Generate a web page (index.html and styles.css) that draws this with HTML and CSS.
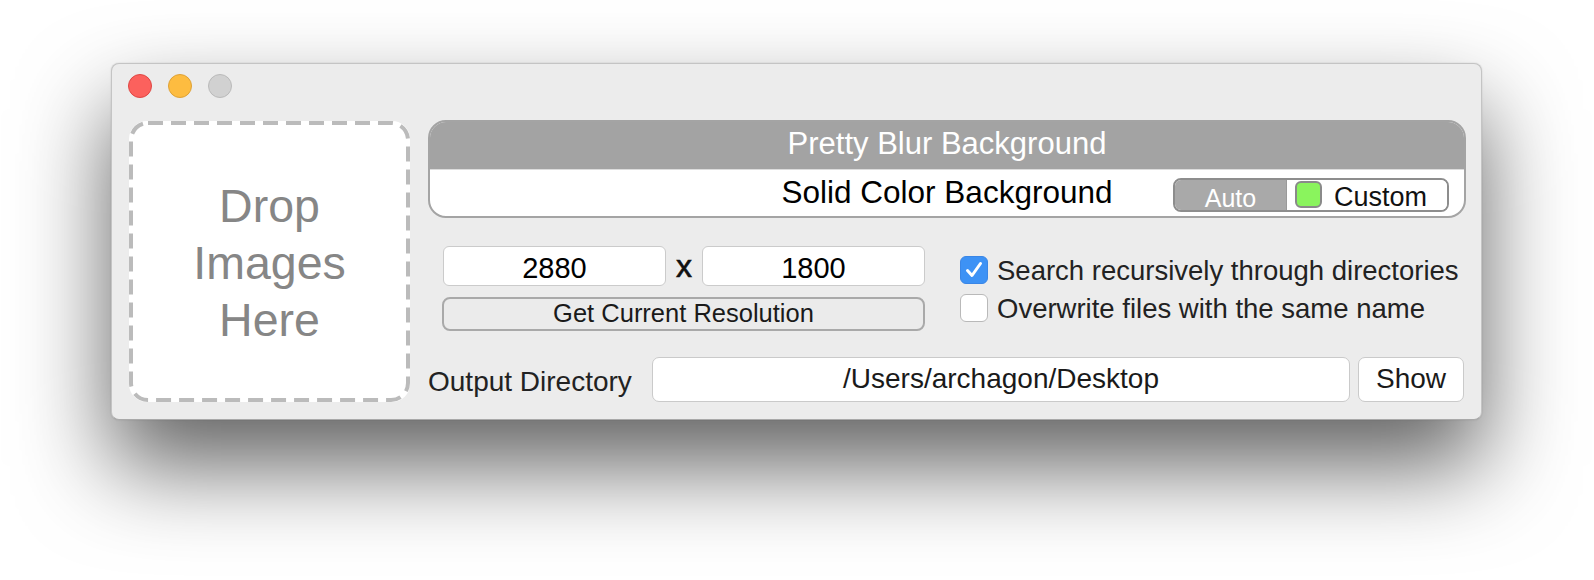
FILE: index.html
```html
<!DOCTYPE html>
<html>
<head>
<meta charset="utf-8">
<link rel="stylesheet" href="styles.css">
</head>
<body>
<div class="window">
  <div class="titlebar">
    <span class="light red"></span>
    <span class="light yellow"></span>
    <span class="light grey"></span>
  </div>
  <div class="content">
    <div class="drop">
      <svg class="dash" width="281" height="281" viewBox="0 0 281 281">
        <rect x="2" y="2" width="277" height="277" rx="17" ry="17" fill="none" stroke="#bbbbbb" stroke-width="4" stroke-dasharray="15 8"/>
      </svg>
      <div class="drop-text">Drop<br>Images<br>Here</div>
    </div>
    <div class="main">
      <div class="panel">
        <div class="panel-head">Pretty Blur Background</div>
        <div class="panel-row">
          <span></span>
          <span class="panel-title">Solid Color Background</span>
          <div class="segmented">
            <div class="seg-auto">Auto</div>
            <div class="seg-custom"><span class="swatch"></span><span class="seg-label">Custom</span></div>
          </div>
        </div>
      </div>
      <div class="middle">
        <div class="res">
          <div class="res-inputs">
            <div class="field">2880</div>
            <span class="times">x</span>
            <div class="field">1800</div>
          </div>
          <div class="btn-wide">Get Current Resolution</div>
        </div>
        <div class="checks">
          <div class="check">
            <span class="box checked"><svg width="28" height="28" viewBox="0 0 28 28"><path d="M7.5 14.5 L12 19.5 L20.5 7.5" fill="none" stroke="#fff" stroke-width="3" stroke-linecap="round" stroke-linejoin="round"/></svg></span>
            <span class="check-label">Search recursively through directories</span>
          </div>
          <div class="check">
            <span class="box"></span>
            <span class="check-label">Overwrite files with the same name</span>
          </div>
        </div>
      </div>
      <div class="output">
        <span class="out-label">Output Directory</span>
        <div class="path">/Users/archagon/Desktop</div>
        <div class="show">Show</div>
      </div>
    </div>
  </div>
</div>
</body>
</html>
```

FILE: styles.css
```css
* { box-sizing: border-box; }
html, body {
  margin: 0;
  background: #ffffff;
}
body {
  padding: 63px 0 0 111px;
  width: 1594px;
  height: 580px;
  overflow: hidden;
  font-family: "Liberation Sans", Arial, "Helvetica Neue", sans-serif;
  color: #1e1e1e;
}
.window {
  width: 1371px;
  height: 357px;
  background: #ececec;
  border: 1px solid #c4c4c4;
  border-bottom-color: #a9a9a9;
  border-radius: 8px;
  box-shadow: 0 46px 92px rgba(0, 0, 0, 0.62), 0 0 2px rgba(0, 0, 0, 0.14);
  display: flex;
  flex-direction: column;
}
.titlebar {
  height: 44px;
  display: flex;
  align-items: center;
  gap: 16px;
  padding-left: 16px;
}
.light {
  width: 24px;
  height: 24px;
  border-radius: 50%;
  display: block;
}
.red { background: #fc615d; border: 1px solid #df4744; }
.yellow { background: #fdbc40; border: 1px solid #dea236; }
.grey { background: #d1d1d1; border: 1px solid #bababa; }

.content {
  flex: 1;
  display: flex;
  gap: 18px;
  padding: 12px 15px 17px 17px;
}
.drop {
  position: relative;
  width: 281px;
  height: 281px;
  margin-top: 1px;
  flex: 0 0 281px;
  background: #ffffff;
  border-radius: 18px;
  display: flex;
  align-items: center;
  justify-content: center;
}
.dash {
  position: absolute;
  left: 0;
  top: 0;
}
.drop-text {
  font-size: 46.5px;
  line-height: 57px;
  color: #868686;
  text-align: center;
  margin-top: 3px;
}
.main {
  flex: 1;
  display: flex;
  flex-direction: column;
}
.panel {
  height: 98px;
  border: 2px solid #a4a4a4;
  border-radius: 18px;
  overflow: hidden;
  background: #ffffff;
  display: flex;
  flex-direction: column;
}
.panel-head {
  height: 48px;
  background: #a3a3a3;
  color: #ffffff;
  font-size: 31px;
  line-height: 44px;
  text-align: center;
  border-bottom: 1px solid #dcdcdc;
}
.panel-row {
  flex: 1;
  display: grid;
  grid-template-columns: 1fr auto 1fr;
  align-items: center;
}
.panel-title {
  font-size: 31.5px;
  color: #000;
  margin-top: -1px;
}
.segmented {
  justify-self: end;
  margin-right: 15px;
  margin-top: 3px;
  width: 276px;
  height: 34px;
  border: 2px solid #8d8d8d;
  border-radius: 8px;
  overflow: hidden;
  display: flex;
}
.seg-auto {
  width: 112px;
  background: #a9a9a9;
  color: #ffffff;
  font-size: 25px;
  line-height: 30px;
  padding-top: 3px;
  text-align: center;
  border-right: 1px solid #9a9a9a;
}
.seg-custom {
  flex: 1;
  background: #ffffff;
  display: flex;
  align-items: center;
  gap: 12px;
  padding-left: 8px;
  font-size: 27px;
  color: #111;
}
.seg-label {
  padding-top: 6px;
}
.swatch {
  width: 27px;
  height: 27px;
  background: #8af45d;
  border: 2px solid #8a8a8a;
  border-radius: 6px;
}
.middle {
  margin-top: 28px;
  padding-left: 14px;
  display: flex;
  gap: 35px;
}
.res {
  width: 483px;
  display: flex;
  flex-direction: column;
  gap: 11px;
}
.res-inputs {
  display: flex;
  align-items: center;
  padding-left: 1px;
}
.field {
  width: 223px;
  height: 40px;
  background: #ffffff;
  border: 1px solid #cbcbcb;
  border-radius: 6px;
  font-size: 29px;
  line-height: 42px;
  text-align: center;
  color: #000;
}
.times {
  width: 36px;
  text-align: center;
  font-size: 32px;
  color: #111;
  -webkit-text-stroke: 0.6px #111;
  margin-top: 0px;
}
.btn-wide {
  height: 34px;
  border: 2px solid #a9a9a9;
  border-radius: 8px;
  background: #ebebeb;
  font-size: 25.5px;
  line-height: 29px;
  text-align: center;
  color: #1a1a1a;
}
.checks {
  display: flex;
  flex-direction: column;
  gap: 10px;
  padding-top: 10px;
}
.check {
  display: flex;
  align-items: center;
  gap: 9px;
  font-size: 27.5px;
  color: #222;
  height: 28px;
}
.check-label {
  padding-top: 2px;
}
.check + .check .check-label {
  padding-top: 1px;
}
.box {
  width: 28px;
  height: 28px;
  border-radius: 6px;
  background: #ffffff;
  border: 1px solid #b9b9b9;
  flex: 0 0 28px;
  display: block;
}
.box.checked {
  background: #3d92f5;
  border: 1px solid #3a86e6;
}
.box svg { display: block; margin: -1px; }
.output {
  margin-top: 26px;
  display: flex;
  align-items: center;
  gap: 8px;
  padding-right: 2px;
}
.out-label {
  flex: 0 0 216px;
  font-size: 28px;
  color: #222;
  padding-top: 5px;
}
.path {
  flex: 1;
  height: 45px;
  background: #ffffff;
  border: 1px solid #cacaca;
  border-radius: 7px;
  font-size: 28px;
  line-height: 42px;
  text-align: center;
  color: #1a1a1a;
}
.show {
  width: 106px;
  height: 45px;
  background: #ffffff;
  border: 1px solid #cacaca;
  border-radius: 7px;
  font-size: 28px;
  line-height: 42px;
  text-align: center;
  color: #1a1a1a;
}
```
